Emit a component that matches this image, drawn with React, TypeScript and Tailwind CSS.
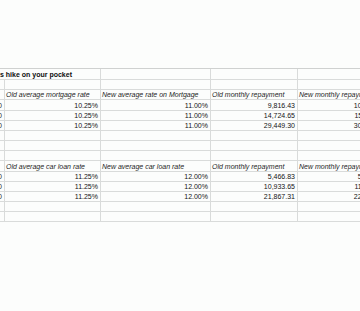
import React from "react";

const W = ["w-[5px]", "w-[96px]", "w-[110px]", "w-[87px]", "w-[90px]"];

type Cell = { t?: string; kind?: "h" | "n" | "title" | "edge" };

function Row({ h, cells, title }: { h: string; cells: Cell[]; title?: boolean }) {
  return (
    <div className={`flex ${h} shrink-0`}>
      {cells.map((c, i) => {
        const border =
          title && i === 0 ? "border-b border-[#d9dbda]" : "border-r border-b border-[#d9dbda]";
        let inner: React.ReactNode = null;
        if (c.t) {
          if (c.kind === "title") {
            inner = (
              <span className="whitespace-nowrap font-bold text-[#0d0d0d] leading-[7px]">{c.t}</span>
            );
          } else if (c.kind === "h") {
            inner = (
              <span className="whitespace-nowrap italic text-[#1e1e1e] leading-[7px] pl-[1px]">{c.t}</span>
            );
          } else if (c.kind === "edge") {
            inner = <span className="whitespace-nowrap text-[#1e1e1e] leading-[7px] pr-[2px]">{c.t}</span>;
          } else {
            inner = <span className="whitespace-nowrap text-[#141414] leading-[7px] pr-[2px]">{c.t}</span>;
          }
        }
        const justify = c.kind === "n" || c.kind === "edge" ? "justify-end" : "justify-start";
        const ovf = c.kind === "edge" ? "overflow-hidden" : "overflow-visible";
        return (
          <div
            key={i}
            className={`${W[i]} shrink-0 h-full box-border ${border} flex items-center ${justify} ${ovf}`}
          >
            {inner}
          </div>
        );
      })}
    </div>
  );
}

const empty: Cell[] = [{}, {}, {}, {}, {}];

export default function App() {
  const rows: { h: string; cells: Cell[]; title?: boolean }[] = [
    { h: "h-[11px]", title: true, cells: [{ t: "s hike on your pocket", kind: "title" }, {}, {}, {}, {}] },
    { h: "h-[10px]", cells: empty },
    {
      h: "h-[10px]",
      cells: [
        {},
        { t: "Old average mortgage rate", kind: "h" },
        { t: "New average rate on Mortgage", kind: "h" },
        { t: "Old monthly repayment", kind: "h" },
        { t: "New monthly repayment", kind: "h" },
      ],
    },
    {
      h: "h-[11px]",
      cells: [
        { t: "00", kind: "edge" },
        { t: "10.25%", kind: "n" },
        { t: "11.00%", kind: "n" },
        { t: "9,816.43", kind: "n" },
        { t: "10,322.74", kind: "n" },
      ],
    },
    {
      h: "h-[10px]",
      cells: [
        { t: "00", kind: "edge" },
        { t: "10.25%", kind: "n" },
        { t: "11.00%", kind: "n" },
        { t: "14,724.65", kind: "n" },
        { t: "15,484.11", kind: "n" },
      ],
    },
    {
      h: "h-[10px]",
      cells: [
        { t: "00", kind: "edge" },
        { t: "10.25%", kind: "n" },
        { t: "11.00%", kind: "n" },
        { t: "29,449.30", kind: "n" },
        { t: "30,968.22", kind: "n" },
      ],
    },
    { h: "h-[10px]", cells: empty },
    { h: "h-[10px]", cells: empty },
    { h: "h-[10px]", cells: empty },
    {
      h: "h-[11px]",
      cells: [
        {},
        { t: "Old average car loan rate", kind: "h" },
        { t: "New average car loan rate", kind: "h" },
        { t: "Old monthly repayment", kind: "h" },
        { t: "New monthly repayment", kind: "h" },
      ],
    },
    {
      h: "h-[10px]",
      cells: [
        { t: "00", kind: "edge" },
        { t: "11.25%", kind: "n" },
        { t: "12.00%", kind: "n" },
        { t: "5,466.83", kind: "n" },
        { t: "5,623.68", kind: "n" },
      ],
    },
    {
      h: "h-[10px]",
      cells: [
        { t: "00", kind: "edge" },
        { t: "11.25%", kind: "n" },
        { t: "12.00%", kind: "n" },
        { t: "10,933.65", kind: "n" },
        { t: "11,247.36", kind: "n" },
      ],
    },
    {
      h: "h-[10px]",
      cells: [
        { t: "00", kind: "edge" },
        { t: "11.25%", kind: "n" },
        { t: "12.00%", kind: "n" },
        { t: "21,867.31", kind: "n" },
        { t: "22,494.72", kind: "n" },
      ],
    },
    { h: "h-[10px]", cells: empty },
    { h: "h-[10px]", cells: empty },
  ];

  return (
    <div
      className="w-[360px] h-[311px] overflow-hidden bg-[#fcfdfc] text-[7px]"
      style={{ fontFamily: '"Liberation Sans", Arial, sans-serif' }}
    >
      <div className="pt-[68px]">
        <div className="flex flex-col w-[388px] border-t border-[#cfd1d0]">
          {rows.map((r, i) => (
            <Row key={i} h={r.h} cells={r.cells} title={r.title} />
          ))}
        </div>
      </div>
    </div>
  );
}
